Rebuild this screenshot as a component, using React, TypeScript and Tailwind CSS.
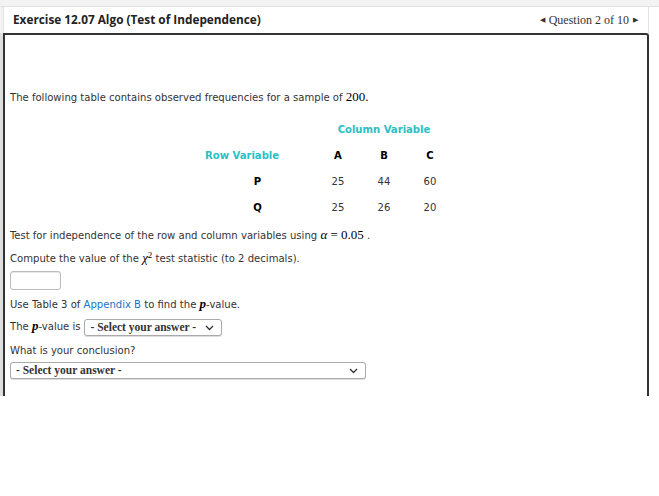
const body = "font-['DejaVu_Sans_Condensed','DejaVu_Sans',sans-serif] text-[11.2px] text-[#333]";
const math = "font-['Liberation_Serif',serif] text-[13px] leading-none text-black";

function Chevron() {
  return (
    <svg width="9" height="6" viewBox="0 0 9 6" className="shrink-0">
      <path d="M1 1l3.5 3.5L8 1" fill="none" stroke="#333" strokeWidth="1.3" />
    </svg>
  );
}

function Select({ className }: { className: string }) {
  return (
    <div
      className={`flex h-[17px] items-center justify-between rounded-[3px] border border-[#aaa] bg-white pl-[5px] pr-[7px] shadow-[0_1px_1px_rgba(0,0,0,0.15)] ${className}`}
    >
      <span className="font-['Liberation_Serif',serif] text-[11.5px] font-bold leading-none text-[#333]">
        - Select your answer -
      </span>
      <Chevron />
    </div>
  );
}

const rows = [
  { label: 'P', values: [25, 44, 60] },
  { label: 'Q', values: [25, 26, 20] },
];

export default function App() {
  return (
    <div className="h-[496px] w-[659px] overflow-hidden bg-white">
      <div className="h-[7px] border-b border-[#e2e2e2] bg-[#f3f3f3]" />
      <div className="flex">
        <div className="flex w-[3px] flex-col">
          <div className="h-[26px] bg-[#f3f3f3]" />
          <div className="h-[363px] bg-[#dedede]" />
        </div>
        <div className="w-[646px]">
          {/* Header */}
          <div className="flex h-[26px] items-center justify-between border-x border-[#e2e2e2] bg-white pl-[9px] pr-[10px]">
            <h1 className="font-['Open_Sans',sans-serif] text-[11.8px] font-bold text-[#222]">
              Exercise 12.07 Algo (Test of Independence)
            </h1>
            <div className="flex items-center gap-[4px] font-['Liberation_Serif',serif] text-[12px] text-[#333]">
              <span className="text-[7px]">◀</span>
              <span>Question 2 of 10</span>
              <span className="text-[7px]">▶</span>
            </div>
          </div>

          {/* Question box */}
          <div className={`h-[363px] rounded-tr-[3px] border-x-2 border-t-2 border-[#333] pl-[5px] pt-[54px] ${body}`}>
            <p className="h-[18px] leading-[18px]">
              The following table contains observed frequencies for a sample of <span className={math}>200.</span>
            </p>

            <div className="mt-[10px] grid grid-cols-[115px_46px_46px_46px] pl-[190px] leading-[26px]">
              <div />
              <div className="col-span-3 text-center font-bold text-[#2bc0c4]">Column Variable</div>
              <div className="pl-[5px] font-bold text-[#2bc0c4]">Row Variable</div>
              <div className="text-center font-bold text-black">A</div>
              <div className="text-center font-bold text-black">B</div>
              <div className="text-center font-bold text-black">C</div>
              {rows.map((r) => [
                <div key={r.label} className="text-center font-bold text-black">
                  {r.label}
                </div>,
                ...r.values.map((v, i) => (
                  <div key={r.label + i} className="text-center">
                    {v}
                  </div>
                )),
              ])}
            </div>

            <p className="mt-[3px] h-[23px] leading-[23px]">
              Test for independence of the row and column variables using{' '}
              <span className={math}>
                <i>α</i> = 0.05
              </span>{' '}
              .
            </p>
            <p className="h-[23px] leading-[23px]">
              Compute the value of the{' '}
              <span className={math}>
                <i>χ</i>
                <sup className="text-[9px]">2</sup>
              </span>{' '}
              test statistic (to 2 decimals).
            </p>
            <input className="mt-[1px] block h-[19px] w-[51px] rounded-[3px] border border-[#bbb] shadow-[inset_0_1px_1px_rgba(0,0,0,0.1)]" />
            <p className="mt-[3px] h-[23px] leading-[23px]">
              Use Table 3 of <span className="text-[#1a73c8]">Appendix B</span> to find the{' '}
              <b className={`${math} italic`}>p</b>-value.
            </p>
            <div className="flex h-[23px] items-center gap-[4px]">
              <span>
                The <b className={`${math} italic`}>p</b>-value is
              </span>
              <Select className="w-[138px]" />
            </div>
            <p className="h-[23px] leading-[23px]">What is your conclusion?</p>
            <Select className="w-[356px]" />
          </div>
        </div>
        <div className="flex-1 bg-white" />
      </div>
    </div>
  );
}
